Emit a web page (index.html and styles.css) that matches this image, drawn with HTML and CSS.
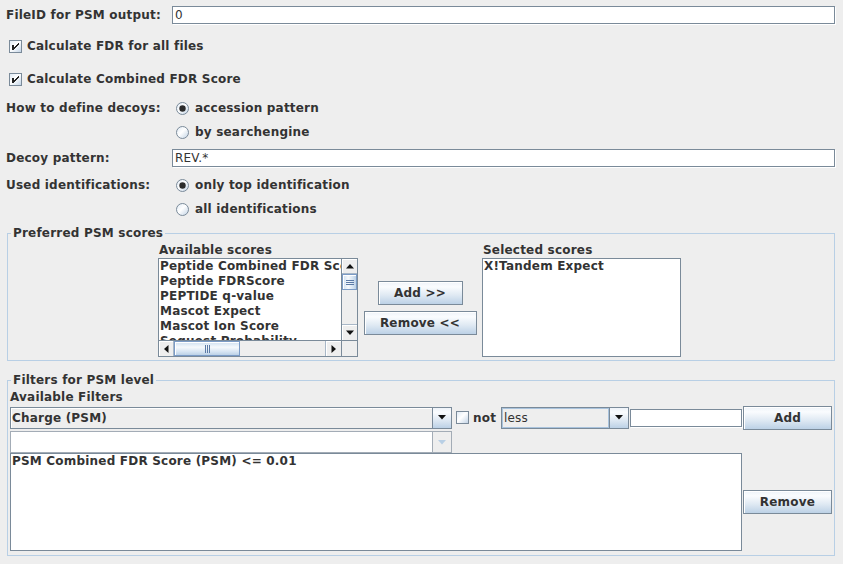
FILE: index.html
```html
<!DOCTYPE html>
<html>
<head>
<meta charset="utf-8">
<link rel="stylesheet" href="styles.css">
</head>
<body>
<svg class="defs" width="0" height="0">
  <defs>
    <linearGradient id="gBox" x1="0" y1="0" x2="1" y2="1">
      <stop offset="0" stop-color="#dde8f3"/>
      <stop offset="0.45" stop-color="#ffffff"/>
      <stop offset="1" stop-color="#bfd1e4"/>
    </linearGradient>
  </defs>
</svg>

<div class="form">
  <div class="row row-field">
    <span class="lbl">FileID for PSM output:</span>
    <div class="tfield">0</div>
  </div>

  <div class="row row-check mt12">
    <svg class="cb" width="13" height="13" viewBox="0 0 13 13"><rect x="0.5" y="0.5" width="12" height="12" fill="url(#gBox)" stroke="#7a8a99"/><path d="M3 5h2v5h-2z M9 3h1v2h-1z M8 4h1v2h-1z M7 5h1v2h-1z M6 6h1v2h-1z M5 7h1v2h-1z" fill="#222"/></svg>
    <span>Calculate FDR for all files</span>
  </div>

  <div class="row row-check mt13">
    <svg class="cb" width="13" height="13" viewBox="0 0 13 13"><rect x="0.5" y="0.5" width="12" height="12" fill="url(#gBox)" stroke="#7a8a99"/><path d="M3 5h2v5h-2z M9 3h1v2h-1z M8 4h1v2h-1z M7 5h1v2h-1z M6 6h1v2h-1z M5 7h1v2h-1z" fill="#222"/></svg>
    <span>Calculate Combined FDR Score</span>
  </div>

  <div class="row mt9">
    <span class="lbl">How to define decoys:</span>
    <span class="radio-opt"><svg class="rb" width="13" height="13" viewBox="0 0 13 13"><circle cx="6.5" cy="6.5" r="6" fill="url(#gBox)" stroke="#7a8a99"/><circle cx="6.5" cy="6.5" r="3.2" fill="#2b2b2b"/></svg>accession pattern</span>
  </div>

  <div class="row mt4">
    <span class="lbl"></span>
    <span class="radio-opt"><svg class="rb" width="13" height="13" viewBox="0 0 13 13"><circle cx="6.5" cy="6.5" r="6" fill="url(#gBox)" stroke="#7a8a99"/></svg>by searchengine</span>
  </div>

  <div class="row row-field mt7">
    <span class="lbl">Decoy pattern:</span>
    <div class="tfield">REV.*</div>
  </div>

  <div class="row mt8">
    <span class="lbl">Used identifications:</span>
    <span class="radio-opt"><svg class="rb" width="13" height="13" viewBox="0 0 13 13"><circle cx="6.5" cy="6.5" r="6" fill="url(#gBox)" stroke="#7a8a99"/><circle cx="6.5" cy="6.5" r="3.2" fill="#2b2b2b"/></svg>only top identification</span>
  </div>

  <div class="row mt4">
    <span class="lbl"></span>
    <span class="radio-opt"><svg class="rb" width="13" height="13" viewBox="0 0 13 13"><circle cx="6.5" cy="6.5" r="6" fill="url(#gBox)" stroke="#7a8a99"/></svg>all identifications</span>
  </div>
</div>

<fieldset class="group group1">
  <legend>Preferred PSM scores</legend>
  <div class="scores">
    <div class="col">
      <div class="col-label">Available scores</div>
      <div class="scrollpane">
        <div class="list-view">
          <div class="item">Peptide Combined FDR Score</div>
          <div class="item">Peptide FDRScore</div>
          <div class="item">PEPTIDE q-value</div>
          <div class="item">Mascot Expect</div>
          <div class="item">Mascot Ion Score</div>
          <div class="item">Sequest Probability</div>
        </div>
        <div class="vbar">
          <div class="sbb sbb-top"><svg width="8" height="5" viewBox="0 0 8 5"><path d="M4 0 L8 4.5 L0 4.5 Z" fill="#111"/></svg></div>
          <div class="vthumb"><svg width="8" height="5" viewBox="0 0 8 5"><path d="M0 0.5h8M0 2.5h8M0 4.5h8" stroke="#5b7aa6" stroke-width="1"/></svg></div>
          <div class="track"></div>
          <div class="sbb sbb-bottom"><svg width="8" height="5" viewBox="0 0 8 5"><path d="M0 0.5 L8 0.5 L4 5 Z" fill="#111"/></svg></div>
        </div>
        <div class="hbar">
          <div class="sbb sbb-left"><svg width="5" height="8" viewBox="0 0 5 8"><path d="M0 4 L4.5 0 L4.5 8 Z" fill="#111"/></svg></div>
          <div class="hthumb"><svg width="5" height="8" viewBox="0 0 5 8"><path d="M0.5 0v8M2.5 0v8M4.5 0v8" stroke="#5b7aa6" stroke-width="1"/></svg></div>
          <div class="track"></div>
          <div class="sbb sbb-right"><svg width="5" height="8" viewBox="0 0 5 8"><path d="M0.5 0 L5 4 L0.5 8 Z" fill="#111"/></svg></div>
        </div>
        <div class="corner"></div>
      </div>
    </div>
    <div class="col-mid">
      <div class="btn btn-add">Add &gt;&gt;</div>
      <div class="btn btn-remove">Remove &lt;&lt;</div>
    </div>
    <div class="col">
      <div class="col-label">Selected scores</div>
      <div class="plain-list">
        <div class="item">X!Tandem Expect</div>
      </div>
    </div>
  </div>
</fieldset>

<fieldset class="group group2">
  <legend>Filters for PSM level</legend>
  <div class="filters">
    <div class="flabel">Available Filters</div>
    <div class="frow">
      <div class="combo combo-charge">
        <div class="combo-text">Charge (PSM)</div>
        <div class="combo-btn"><svg width="8" height="5" viewBox="0 0 8 5"><path d="M0 0 L8 0 L4 4.5 Z" fill="#111"/></svg></div>
      </div>
      <svg class="cb cb-not" width="13" height="13" viewBox="0 0 13 13"><rect x="0.5" y="0.5" width="12" height="12" fill="url(#gBox)" stroke="#7a8a99"/></svg>
      <span class="not">not</span>
      <div class="combo combo-less">
        <div class="combo-text less-text">less</div>
        <div class="combo-btn"><svg width="8" height="5" viewBox="0 0 8 5"><path d="M0 0 L8 0 L4 4.5 Z" fill="#111"/></svg></div>
      </div>
      <div class="ffield"></div>
      <div class="btn btn-filter">Add</div>
    </div>
    <div class="combo combo-disabled">
      <div class="combo-text"></div>
      <div class="combo-btn"><svg width="8" height="5" viewBox="0 0 8 5"><path d="M0 0 L8 0 L4 4.5 Z" fill="#b8cfe5"/></svg></div>
    </div>
    <div class="flist-row">
      <div class="flist">
        <div class="item">PSM Combined FDR Score (PSM) &lt;= 0.01</div>
      </div>
      <div class="btn btn-filter btn-rm">Remove</div>
    </div>
  </div>
</fieldset>
</body>
</html>
```

FILE: styles.css
```css
* { box-sizing: border-box; }
html, body { margin: 0; padding: 0; }
body {
  width: 843px;
  height: 564px;
  overflow: hidden;
  background: #eeeeee;
  color: #333333;
  font-family: "DejaVu Sans", "Noto Sans", sans-serif;
  font-weight: bold;
  font-size: 12px;
  letter-spacing: 0.2px;
}
.defs { display: block; width: 0; height: 0; overflow: hidden; }

.form { padding: 6px 8px 0 6px; }
.row { display: flex; align-items: center; height: 20px; white-space: nowrap; }
.row-field { height: 18px; }
.mt4 { margin-top: 4px; }
.mt7 { margin-top: 7px; }
.mt8 { margin-top: 8px; }
.mt9 { margin-top: 9px; }
.mt12 { margin-top: 12px; }
.mt13 { margin-top: 13px; }
.lbl { width: 166px; flex: none; }
.tfield {
  flex: 1;
  height: 18px;
  background: #fff;
  border: 1px solid #7a8a99;
  box-shadow: 1px 1px 0 #ffffff;
  font-weight: normal;
  line-height: 16px;
  padding-left: 2px;
}
.row-check { padding-left: 3px; }
.cb { display: block; flex: none; margin-right: 5px; }
.radio-opt { display: flex; align-items: center; margin-left: 4px; }
.rb { display: block; flex: none; margin-right: 6px; }

.group {
  margin: 7px 8px 0 7px;
  padding: 0;
  border: 1px solid #b8cfe5;
  min-width: 0;
}
.group legend {
  margin-left: 3px;
  padding: 0 2px;
  line-height: 14px;
  font-weight: bold;
}
.group2 { margin-top: 12px; }

.scores { display: flex; padding: 3px 0 3px 150px; }
.col { display: flex; flex-direction: column; }
.col-label { height: 14px; line-height: 14px; margin-bottom: 1px; padding-left: 1px; white-space: nowrap; }
.scrollpane {
  width: 200px;
  height: 99px;
  border: 1px solid #7a8a99;
  background: #fff;
  display: grid;
  grid-template-columns: 1fr 16px;
  grid-template-rows: 1fr 16px;
}
.list-view { overflow: hidden; padding-left: 1px; }
.item { height: 15px; line-height: 15px; white-space: nowrap; }
.vbar {
  display: flex;
  flex-direction: column;
  background: #eeeeee;
  border-left: 1px solid #7a8a99;
}
.hbar {
  display: flex;
  background: #eeeeee;
  border-top: 1px solid #7a8a99;
}
.corner { background: #eeeeee; border-left: 1px solid #7a8a99; border-top: 1px solid #7a8a99; }
.track { flex: 1; }
.sbb {
  flex: none;
  display: flex;
  align-items: center;
  justify-content: center;
  background: #eeeeee;
  box-shadow: inset 1px 1px 0 #ffffff;
}
.sbb svg, .vthumb svg, .hthumb svg, .combo-btn svg { display: block; }
.sbb-top { height: 15px; border-bottom: 1px solid #a8b7c7; }
.sbb-bottom { height: 16px; border-top: 1px solid #a8b7c7; }
.sbb-left { width: 15px; border-right: 1px solid #a8b7c7; }
.sbb-right { width: 16px; border-left: 1px solid #a8b7c7; }
.vthumb {
  height: 16px;
  display: flex;
  align-items: center;
  justify-content: center;
  border: 1px solid #7b9bc6;
  background: linear-gradient(to right, #cfe0f1, #f6f9fc 40%, #d6e4f2 75%, #bcd1e6);
  box-shadow: inset 1px 1px 0 #ffffff;
}
.hthumb {
  width: 66px;
  display: flex;
  align-items: center;
  justify-content: center;
  border: 1px solid #7b9bc6;
  background: linear-gradient(to bottom, #cfe0f1, #f6f9fc 40%, #d6e4f2 75%, #bcd1e6);
  box-shadow: inset 1px 1px 0 #ffffff;
}
.col-mid {
  width: 124px;
  display: flex;
  flex-direction: column;
  align-items: center;
  justify-content: center;
  gap: 6px;
  padding-top: 15px;
}
.btn {
  display: flex;
  align-items: center;
  justify-content: center;
  height: 24px;
  border: 1px solid #7a8a99;
  background: linear-gradient(to bottom, #eef3f9 0%, #fafcfe 22%, #dfe9f3 60%, #bcd1e6 100%);
  box-shadow: inset 1px 1px 0 #ffffff;
  white-space: nowrap;
}
.btn-add { width: 85px; }
.btn-remove { width: 113px; }
.plain-list {
  width: 199px;
  height: 99px;
  border: 1px solid #7a8a99;
  background: #fff;
  padding-left: 1px;
}

.filters { padding: 3px 2px 4px 2px; }
.flabel { height: 14px; line-height: 14px; margin-bottom: 1px; white-space: nowrap; }
.frow { display: flex; align-items: center; height: 25px; white-space: nowrap; }
.combo {
  display: flex;
  height: 22px;
  border: 1px solid #7a8a99;
  background: #eeeeee;
}
.combo-text {
  flex: 1;
  line-height: 20px;
  padding-left: 1px;
  box-shadow: inset 1px 1px 0 #ffffff;
  overflow: hidden;
}
.combo-btn {
  width: 19px;
  flex: none;
  display: flex;
  align-items: center;
  justify-content: center;
  border-left: 1px solid #7a8a99;
  background: linear-gradient(to bottom, #eef3f9 0%, #fafcfe 22%, #dfe9f3 60%, #bcd1e6 100%);
}
.combo-charge { flex: 1; }
.cb-not { margin-left: 4px; margin-right: 4px; }
.not { width: 22px; margin-right: 6px; }
.combo-less { width: 128px; flex: none; }
.combo-less .combo-text { box-shadow: inset 0 0 0 1px #a9c3dd; padding-left: 2px; font-weight: normal; }
.ffield {
  width: 112px;
  height: 18px;
  margin-left: 1px;
  flex: none;
  background: #fff;
  border: 1px solid #7a8a99;
  box-shadow: 1px 1px 0 #ffffff;
}
.btn-filter { width: 89px; flex: none; margin-left: 1px; }
.combo-disabled {
  width: 442px;
  margin-top: 1px;
  border-color: #a3acb6;
  background: #ffffff;
}
.combo-disabled .combo-text { box-shadow: none; }
.combo-disabled .combo-btn { background: #eeeeee; border-left-color: #a3acb6; }
.flist-row { display: flex; align-items: center; }
.flist {
  flex: 1;
  height: 98px;
  background: #fff;
  border: 1px solid #7a8a99;
  padding-left: 1px;
}
.btn-rm { align-self: center; }
```
